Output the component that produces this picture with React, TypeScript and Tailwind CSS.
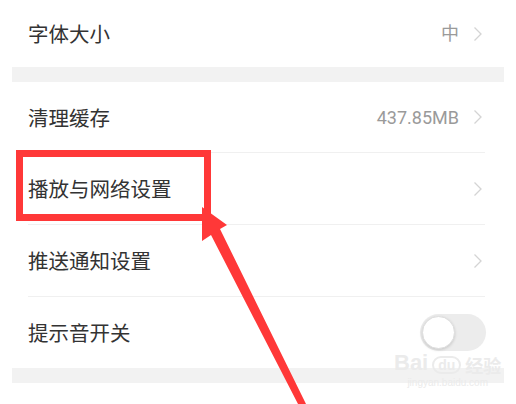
import React from "react";

const cjk = { fontFamily: '"Noto Sans CJK SC", "Noto Sans", sans-serif' };

function Chevron() {
  return (
    <svg width="10" height="16" viewBox="0 0 10 16" className="ml-[14px] mr-[2px]">
      <path d="M1.5 1.5 L8 8 L1.5 14.5" fill="none" stroke="#d4d4d4" strokeWidth="1.3" />
    </svg>
  );
}

function Row({
  label,
  value,
  chevron = true,
  divider = true,
  height = "h-[72px]",
  children,
}: {
  label: string;
  value?: string;
  chevron?: boolean;
  divider?: boolean;
  height?: string;
  children?: React.ReactNode;
}) {
  return (
    <div className={`flex items-center pl-4 pr-[19px] ${height}`}>
      <div
        className={`flex h-full flex-1 items-center ${divider ? "border-b border-[#f0f0f0]" : ""}`}
      >
        <span className="flex-1 text-[20.5px] text-[#333333]" style={cjk}>
          {label}
        </span>
        {value && (
          <span
            className="text-[18px] text-[#9a9a9a]"
            style={{ fontFamily: 'Roboto, "Noto Sans CJK SC", sans-serif' }}
          >
            {value}
          </span>
        )}
        {chevron && <Chevron />}
        {children}
      </div>
    </div>
  );
}

export default function App() {
  return (
    <div className="relative h-[404px] w-[516px] overflow-hidden bg-white px-3">
      <Row label="字体大小" value="中" divider={false} height="h-[67px]" />
      <div className="h-[15px] bg-[#f2f2f2]" />
      <Row label="清理缓存" value="437.85MB" height="h-[71px]" />
      <Row label="播放与网络设置" />
      <Row label="推送通知设置" />
      <Row label="提示音开关" chevron={false} divider={false} height="h-[71px]">
        <div className="relative -mr-[1px] flex h-[37px] w-[66px] items-center rounded-full bg-[#ececec]">
          <div className="ml-[2px] h-[33px] w-[33px] rounded-full border border-[#dedede] bg-white shadow-[0_1px_3px_rgba(0,0,0,0.15)]" />
        </div>
      </Row>
      <div className="h-[15px] bg-[#f2f2f2]" />

      {/* red highlight box */}
      <div className="absolute left-4 top-[150px] h-[71px] w-[195px] border-[7px] border-[#ff3838]" />

      {/* red arrow */}
      <svg className="absolute left-0 top-0" width="516" height="404" viewBox="0 0 516 404">
        <polygon
          points="202,207 227,225 220,229 306,404 298,404 211,235 202,241"
          fill="#ff3838"
        />
      </svg>

      {/* watermark */}
      <div className="absolute left-[394px] top-[352px] flex flex-col items-center leading-none text-[#ebebeb]">
        <div className="flex items-end gap-1">
          <span className="text-[22px] font-bold" style={{ fontFamily: '"Liberation Sans", sans-serif' }}>
            Bai
          </span>
          <span className="rounded-full border-2 border-[#ebebeb] px-1 text-[14px] font-bold" style={{ fontFamily: '"Liberation Sans", sans-serif' }}>
            du
          </span>
          <span className="text-[18px] font-bold" style={cjk}>
            经验
          </span>
        </div>
        <span className="mt-1 text-[10px]" style={{ fontFamily: '"Liberation Sans", sans-serif' }}>
          jingyan.baidu.com
        </span>
      </div>
    </div>
  );
}
